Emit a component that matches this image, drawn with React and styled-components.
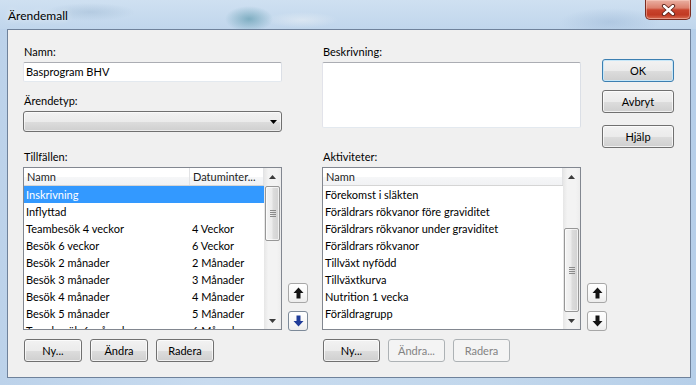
import React from 'react';
import styled, { createGlobalStyle, css } from 'styled-components';

const Global = createGlobalStyle`
  * { box-sizing: border-box; }
  html, body { margin: 0; padding: 0; width: 696px; height: 385px; overflow: hidden; background: #c3d7ec; }
  body { font-family: Lato, "Liberation Sans", sans-serif; font-size: 11px; color: #000; }
`;

const Window = styled.div`
  width: 696px;
  height: 385px;
  display: flex;
  flex-direction: column;
  background: linear-gradient(to right, #bcd2ea 0%, #c8dbef 30%, #c2d7ec 70%, #b6cfe9 100%);
`;

const TitleBar = styled.div`
  height: 29px;
  display: flex;
  align-items: flex-start;
  padding-left: 8px;
  background:
    radial-gradient(ellipse 24px 13px at 249px 19px, rgba(80, 145, 165, 0.6), rgba(80, 145, 165, 0) 100%),
    radial-gradient(ellipse 36px 8px at 302px 20px, rgba(235, 240, 245, 0.55), rgba(235, 240, 245, 0) 100%),
    radial-gradient(ellipse 45px 9px at 90px 12px, rgba(150, 178, 205, 0.4), rgba(150, 178, 205, 0) 100%),
    radial-gradient(ellipse 50px 14px at 610px 22px, rgba(140, 170, 205, 0.35), rgba(140, 170, 205, 0) 100%),
    linear-gradient(to bottom, #cfe0f1 0%, #c0d6ec 100%);
`;

const TitleText = styled.div`
  padding-top: 8px;
  line-height: 15px;
  font-size: 12px;
  color: #000;
  text-shadow: 0 0 6px rgba(255, 255, 255, 0.9);
`;

const CloseBtn = styled.div`
  width: 46px;
  height: 20px;
  margin-left: auto;
  margin-right: 5px;
  border: 1px solid #7a2c20;
  border-top: none;
  border-radius: 0 0 5px 5px;
  background: linear-gradient(to bottom, #eab0a2 0%, #dc806d 42%, #c9442d 52%, #c13a23 78%, #d86c52 100%);
  box-shadow: inset 0 0 0 1px rgba(255, 215, 205, 0.45);
  display: flex;
  align-items: center;
  justify-content: center;
`;

const Frame = styled.div`
  flex: 1;
  display: flex;
  padding: 0 5px 7px 7px;
`;

const Client = styled.div`
  flex: 1;
  display: flex;
  flex-direction: column;
  background: #f0f0f0;
  border: 1px solid #6f829b;
`;

const TopRow = styled.div`
  height: 119px;
  display: flex;
  align-items: flex-start;
  padding: 14px 0 0 15px;
`;

const Column = styled.div`
  width: ${p => p.$w}px;
  margin-left: ${p => p.$ml || 0}px;
  margin-top: ${p => p.$mt || 0}px;
  display: flex;
  flex-direction: column;
`;

const Label = styled.div`
  height: 15px;
  line-height: 15px;
  margin-top: ${p => p.$mt || 0}px;
  margin-bottom: 3px;
  padding-left: 1px;
  white-space: nowrap;
`;

const fieldBorder = css`
  border: 1px solid;
  border-color: #abadb3 #dbdfe6 #e3e9ef #e2e3ea;
  border-radius: 2px;
  background: #fff;
`;

const TextBox = styled.div`
  ${fieldBorder}
  height: 20px;
  line-height: 18px;
  padding-left: 2px;
`;

const TextArea = styled.div`
  ${fieldBorder}
  height: 66px;
`;

const ComboBox = styled.div`
  height: 21px;
  border: 1px solid #707070;
  border-radius: 3px;
  background: linear-gradient(to bottom, #f2f2f2 0%, #ebebeb 50%, #dddddd 51%, #cfcfcf 100%);
  box-shadow: inset 0 0 0 1px rgba(255, 255, 255, 0.6);
  display: flex;
  align-items: center;
  justify-content: flex-end;
  padding-right: 4px;
`;

const Button = styled.div`
  width: ${p => p.$w || 58}px;
  height: 23px;
  margin-top: ${p => p.$mt || 0}px;
  border: 1px solid #707070;
  border-radius: 3px;
  background: linear-gradient(to bottom, #f2f2f2 0%, #ebebeb 50%, #dddddd 51%, #cfcfcf 100%);
  box-shadow: inset 0 0 0 1px rgba(255, 255, 255, 0.7);
  display: flex;
  align-items: center;
  justify-content: center;
  line-height: 15px;
  white-space: nowrap;
  ${p => p.$default && css`
    border-color: #3c7fb1;
    box-shadow: inset 0 0 0 1px #c7e7f8;
  `}
  ${p => p.$disabled && css`
    border-color: #adb2b5;
    background: #f4f4f4;
    box-shadow: none;
    color: #838383;
  `}
`;

const BottomRow = styled.div`
  display: flex;
  align-items: flex-start;
  padding-left: 15px;
`;

const ListGroup = styled.div`
  width: 259px;
  margin-left: ${p => p.$ml || 0}px;
  display: flex;
  flex-direction: column;
`;

const ListBox = styled.div`
  height: 163px;
  border: 1px solid #828790;
  background: #fff;
  display: grid;
  grid-template-columns: 1fr 17px;
  overflow: hidden;
`;

const ListBody = styled.div`
  display: flex;
  flex-direction: column;
  overflow: hidden;
`;

const HeaderRow = styled.div`
  height: 18px;
  flex: none;
  display: grid;
  grid-template-columns: ${p => p.$cols};
  background: linear-gradient(to bottom, #ffffff 0%, #ffffff 50%, #f6f7f8 51%, #f1f2f4 100%);
  border-bottom: 1px solid #d5d5d5;
`;

const HeaderCell = styled.div`
  line-height: 17px;
  padding-left: 3px;
  border-right: 1px solid #e2e3e5;
  white-space: nowrap;
  overflow: hidden;
  color: #1e1e1e;
`;

const Row = styled.div`
  height: 17px;
  flex: none;
  display: grid;
  grid-template-columns: ${p => p.$cols};
  line-height: 17px;
  ${p => p.$selected && css`
    background: #3399ff;
    color: #fff;
  `}
`;

const Cell = styled.div`
  padding-left: 2px;
  white-space: nowrap;
  overflow: hidden;
`;

const ScrollBar = styled.div`
  display: flex;
  flex-direction: column;
  background: linear-gradient(to right, #e6e6e6 0%, #f3f3f3 25%, #f3f3f3 75%, #ededed 100%);
`;

const ScrollArrow = styled.div`
  height: 17px;
  flex: none;
  display: flex;
  align-items: center;
  justify-content: center;
`;

const Track = styled.div`
  flex: 1;
  display: flex;
  flex-direction: column;
  align-items: center;
`;

const Thumb = styled.div`
  width: 15px;
  margin-top: ${p => p.$offset}px;
  height: ${p => p.$size}px;
  border: 1px solid #979797;
  border-radius: 2px;
  background: linear-gradient(to right, #f4f4f4 0%, #ececec 45%, #dcdcdc 55%, #d2d2d2 100%);
  box-shadow: inset 0 0 0 1px rgba(255, 255, 255, 0.65);
  display: flex;
  align-items: center;
  justify-content: center;
`;

const Grip = styled.div`
  width: 6px;
  height: 7px;
  background: repeating-linear-gradient(to bottom, #8a8a8a 0px, #8a8a8a 1px, transparent 1px, transparent 2px);
`;

const ButtonRow = styled.div`
  display: flex;
  gap: 8px;
  margin-top: 9px;
  padding-left: 1px;
`;

const ArrowCol = styled.div`
  width: 20px;
  height: 182px;
  margin-left: ${p => p.$ml}px;
  display: flex;
  flex-direction: column;
  justify-content: flex-end;
  gap: 8px;
`;

const MoveBtn = styled.div`
  width: 20px;
  height: 20px;
  border: 1px solid ${p => (p.$focus ? '#7d8a99' : '#a7a7a7')};
  border-radius: 3px;
  background: linear-gradient(to bottom, #ffffff 0%, #f7f7f7 60%, #ececec 100%);
  display: flex;
  align-items: center;
  justify-content: center;
`;

const UpArrow = ({ color = '#141414' }) => (
  <svg width="11" height="12" viewBox="0 0 11 12">
    <path d="M5.5 0.5 L10.5 6 H7.5 V11.5 H3.5 V6 H0.5 Z" fill={color} />
  </svg>
);

const DownArrow = ({ color = '#141414' }) => (
  <svg width="11" height="12" viewBox="0 0 11 12">
    <path d="M5.5 11.5 L10.5 6 H7.5 V0.5 H3.5 V6 H0.5 Z" fill={color} />
  </svg>
);

const Tri = ({ down, color = '#3c3c3c' }) => (
  <svg width="7" height="4" viewBox="0 0 7 4">
    <path d={down ? 'M0 0 L7 0 L3.5 4 Z' : 'M0 4 L3.5 0 L7 4 Z'} fill={color} />
  </svg>
);

const leftRows = [
  ['Inskrivning', '', true],
  ['Inflyttad', ''],
  ['Teambesök 4 veckor', '4 Veckor'],
  ['Besök 6 veckor', '6 Veckor'],
  ['Besök 2 månader', '2 Månader'],
  ['Besök 3 månader', '3 Månader'],
  ['Besök 4 månader', '4 Månader'],
  ['Besök 5 månader', '5 Månader'],
  ['Teambesök 6 månader', '6 Månader'],
];

const rightRows = [
  'Förekomst i släkten',
  'Föräldrars rökvanor före graviditet',
  'Föräldrars rökvanor under graviditet',
  'Föräldrars rökvanor',
  'Tillväxt nyfödd',
  'Tillväxtkurva',
  'Nutrition 1 vecka',
  'Föräldragrupp',
];

const Scroll = ({ offset, size }) => (
  <ScrollBar>
    <ScrollArrow><Tri /></ScrollArrow>
    <Track>
      <Thumb $offset={offset} $size={size}><Grip /></Thumb>
    </Track>
    <ScrollArrow><Tri down /></ScrollArrow>
  </ScrollBar>
);

export default function App() {
  const leftCols = '166px 1fr';
  return (
    <>
      <Global />
      <Window>
        <TitleBar>
          <TitleText>Ärendemall</TitleText>
          <CloseBtn>
            <svg width="15" height="12" viewBox="0 0 15 12">
              <path d="M3 2 L12 10 M12 2 L3 10" stroke="#5b2219" strokeWidth="4.2" strokeLinecap="round" />
              <path d="M3 2 L12 10 M12 2 L3 10" stroke="#ffffff" strokeWidth="2.4" strokeLinecap="round" />
            </svg>
          </CloseBtn>
        </TitleBar>
        <Frame>
          <Client>
            <TopRow>
              <Column $w={259}>
                <Label>Namn:</Label>
                <TextBox>Basprogram BHV</TextBox>
                <Label $mt={11}>Ärendetyp:</Label>
                <ComboBox><Tri down color="#000" /></ComboBox>
              </Column>
              <Column $w={259} $ml={40}>
                <Label>Beskrivning:</Label>
                <TextArea />
              </Column>
              <Column $w={72} $ml={21} $mt={15}>
                <Button $w={72} $default>OK</Button>
                <Button $w={72} $mt={8}>Avbryt</Button>
                <Button $w={72} $mt={12}>Hjälp</Button>
              </Column>
            </TopRow>
            <BottomRow>
              <ListGroup>
                <Label>Tillfällen:</Label>
                <ListBox>
                  <ListBody>
                    <HeaderRow $cols={leftCols}>
                      <HeaderCell>Namn</HeaderCell>
                      <HeaderCell>Datuminter...</HeaderCell>
                    </HeaderRow>
                    {leftRows.map(([n, d, sel]) => (
                      <Row key={n} $cols={leftCols} $selected={sel}>
                        <Cell>{n}</Cell>
                        <Cell>{d}</Cell>
                      </Row>
                    ))}
                  </ListBody>
                  <Scroll offset={1} size={55} />
                </ListBox>
                <ButtonRow>
                  <Button>Ny...</Button>
                  <Button>Ändra</Button>
                  <Button>Radera</Button>
                </ButtonRow>
              </ListGroup>
              <ArrowCol $ml={6}>
                <MoveBtn><UpArrow /></MoveBtn>
                <MoveBtn $focus><DownArrow color="#1f3c99" /></MoveBtn>
              </ArrowCol>
              <ListGroup $ml={14}>
                <Label>Aktiviteter:</Label>
                <ListBox>
                  <ListBody>
                    <HeaderRow $cols="1fr">
                      <HeaderCell>Namn</HeaderCell>
                    </HeaderRow>
                    {rightRows.map(n => (
                      <Row key={n} $cols="1fr">
                        <Cell>{n}</Cell>
                      </Row>
                    ))}
                  </ListBody>
                  <Scroll offset={43} size={84} />
                </ListBox>
                <ButtonRow>
                  <Button $w={57}>Ny...</Button>
                  <Button $w={57} $disabled>Ändra...</Button>
                  <Button $w={57} $disabled>Radera</Button>
                </ButtonRow>
              </ListGroup>
              <ArrowCol $ml={6}>
                <MoveBtn><UpArrow /></MoveBtn>
                <MoveBtn><DownArrow /></MoveBtn>
              </ArrowCol>
            </BottomRow>
          </Client>
        </Frame>
      </Window>
    </>
  );
}
